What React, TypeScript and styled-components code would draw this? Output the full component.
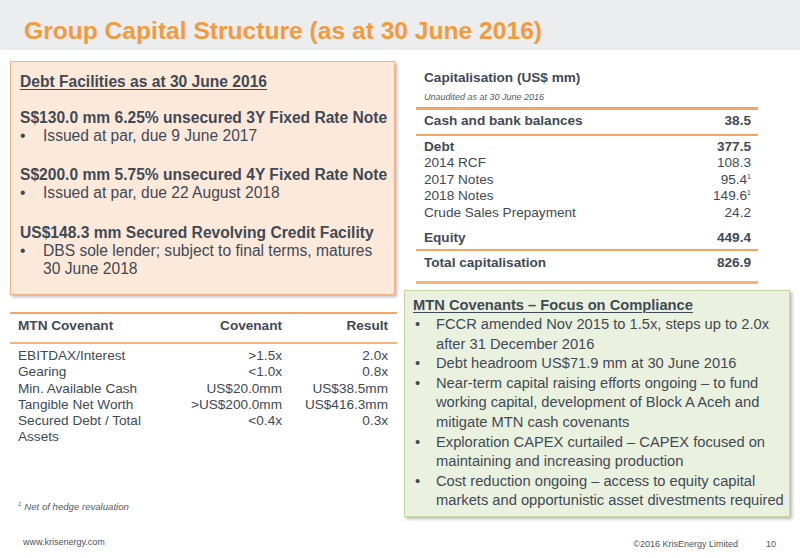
import React from "react";
import styled, { createGlobalStyle } from "styled-components";

const GlobalStyle = createGlobalStyle`
  html, body { margin: 0; padding: 0; background: #ffffff; }
  body { font-family: "Liberation Sans", Arial, sans-serif; color: #3e4955; }
  * { box-sizing: border-box; }
`;

const ORANGE = "#f39a3d";
const TEXT = "#3f4a56";

const Page = styled.div`
  width: 800px;
  height: 558px;
  display: flex;
  flex-direction: column;
  overflow: hidden;
`;

const Header = styled.header`
  height: 50px;
  background: #ecedef;
  padding: 17px 0 0 24px;
`;

const Title = styled.h1`
  margin: 0;
  font-size: 24.6px;
  line-height: 28px;
  font-weight: 700;
  color: ${ORANGE};
`;

const Main = styled.main`
  display: grid;
  grid-template-columns: 387px 386px;
  column-gap: 7px;
  padding: 11px 0 0 10px;
  height: 467px;
`;

const Column = styled.div`
  display: flex;
  flex-direction: column;
  min-height: 0;
`;

const DebtBox = styled.section`
  width: 385px;
  height: 234px;
  background: #fde9da;
  border: 1px solid #f2b58b;
  box-shadow: 2px 2px 3px rgba(0, 0, 0, 0.28);
  padding: 11px 4px 0 9px;
  font-size: 15.6px;
  line-height: 18px;
  color: ${TEXT};
`;

const BoxHeading = styled.h2<{ $size: number }>`
  margin: 0;
  font-size: ${(p) => p.$size}px;
  font-weight: 700;
  text-decoration: underline;
  text-underline-offset: 2px;
  text-decoration-thickness: 1px;
`;

const Facility = styled.div<{ $gap: number }>`
  margin-top: ${(p) => p.$gap}px;
`;

const FacilityTitle = styled.div`
  font-weight: 700;
  white-space: nowrap;
`;

const Bullet = styled.div<{ $indent: number }>`
  display: flex;
  & > span:first-child {
    flex: 0 0 ${(p) => p.$indent}px;
  }
`;

const CovTable = styled.div`
  margin-top: 17px;
  border-top: 2px solid #f5a562;
  font-size: 13.6px;
  line-height: 16.3px;
  color: ${TEXT};
`;

const CovGrid = styled.div<{ $head?: boolean }>`
  display: grid;
  grid-template-columns: 150px 114px 106px;
  padding: ${(p) => (p.$head ? "4px 9px 8px 8px" : "4px 9px 0 8px")};
  font-weight: ${(p) => (p.$head ? 700 : 400)};
  border-bottom: ${(p) => (p.$head ? "2px solid #f6b47c" : "none")};
  line-height: ${(p) => (p.$head ? "16px" : "16.3px")};
`;

const Cell = styled.div<{ $right?: boolean }>`
  text-align: ${(p) => (p.$right ? "right" : "left")};
  white-space: ${(p) => (p.$right ? "nowrap" : "normal")};
`;

const Footnote = styled.div`
  margin-top: auto;
  margin-bottom: 4px;
  padding-left: 8px;
  font-size: 9.6px;
  line-height: 12px;
  font-style: italic;
  color: #555c63;
  sup {
    font-size: 6px;
    vertical-align: 4px;
    margin-right: 3px;
  }
`;

const CapTable = styled.section`
  margin-left: 12px;
  width: 342px;
  color: ${TEXT};
  font-size: 13.6px;
`;

const CapTitle = styled.div`
  padding: 9px 0 0 8px;
  font-weight: 700;
  line-height: 16px;
`;

const CapNote = styled.div`
  padding: 5px 0 0 8px;
  font-size: 9px;
  line-height: 12px;
  font-style: italic;
  color: #555c63;
  margin-bottom: 4px;
`;

const CapSection = styled.div<{ $top: number; $pt: number; $pb: number }>`
  border-top: ${(p) => p.$top}px solid #f5a562;
  padding: ${(p) => p.$pt}px 7px ${(p) => p.$pb}px 8px;
`;

const CapRow = styled.div<{ $bold?: boolean; $gap?: number }>`
  display: flex;
  justify-content: space-between;
  font-weight: ${(p) => (p.$bold ? 700 : 400)};
  line-height: 16.5px;
  margin-top: ${(p) => p.$gap ?? 0}px;
  sup {
    font-size: 7px;
    vertical-align: 5px;
    line-height: 0;
  }
`;

const CapBottom = styled.div`
  border-top: 3px solid #f6b47c;
`;

const GreenBox = styled.section`
  margin-top: 6px;
  width: 386px;
  height: 227px;
  background: #ebf1df;
  border: 1px solid #c5d6a2;
  box-shadow: 2px 2px 3px rgba(0, 0, 0, 0.28);
  padding: 5px 2px 0 8px;
  font-size: 14.7px;
  line-height: 19.6px;
  color: ${TEXT};
`;

const GreenList = styled.div`
  padding-left: 2px;
`;

const Footer = styled.footer`
  display: flex;
  align-items: center;
  padding: 17px 24px 0 23px;
  font-size: 9px;
  line-height: 12px;
  color: #4d555d;
`;

const FooterRight = styled.div`
  margin-left: auto;
  display: flex;
  gap: 28px;
  padding-top: 4px;
`;

const debt = [
  {
    title: "S$130.0 mm 6.25% unsecured 3Y Fixed Rate Note",
    text: "Issued at par, due 9 June 2017",
    gap: 18,
  },
  {
    title: "S$200.0 mm 5.75% unsecured 4Y Fixed Rate Note",
    text: "Issued at par, due 22 August 2018",
    gap: 21,
  },
  {
    title: "US$148.3 mm Secured Revolving Credit Facility",
    text: "DBS sole lender; subject to final terms, matures 30 June 2018",
    gap: 22,
  },
];

const covenants = [
  ["EBITDAX/Interest", ">1.5x", "2.0x"],
  ["Gearing", "<1.0x", "0.8x"],
  ["Min. Available Cash", "US$20.0mm", "US$38.5mm"],
  ["Tangible Net Worth", ">US$200.0mm", "US$416.3mm"],
  ["Secured Debt / Total Assets", "<0.4x", "0.3x"],
];

const compliance = [
  "FCCR amended Nov 2015 to 1.5x, steps up to 2.0x after 31 December 2016",
  "Debt headroom US$71.9 mm at 30 June 2016",
  "Near-term capital raising efforts ongoing \u2013 to fund working capital, development of Block A Aceh and mitigate MTN cash covenants",
  "Exploration CAPEX curtailed \u2013 CAPEX focused on maintaining and increasing production",
  "Cost reduction ongoing \u2013 access to equity capital markets and opportunistic asset divestments required",
];

export default function App() {
  return (
    <Page>
      <GlobalStyle />
      <Header>
        <Title>Group Capital Structure (as at 30 June 2016)</Title>
      </Header>
      <Main>
        <Column>
          <DebtBox>
            <BoxHeading $size={15.6}>Debt Facilities as at 30 June 2016</BoxHeading>
            {debt.map((d) => (
              <Facility key={d.title} $gap={d.gap}>
                <FacilityTitle>{d.title}</FacilityTitle>
                <Bullet $indent={23}>
                  <span>{"\u2022"}</span>
                  <span>{d.text}</span>
                </Bullet>
              </Facility>
            ))}
          </DebtBox>
          <CovTable>
            <CovGrid $head>
              <Cell>MTN Covenant</Cell>
              <Cell $right>Covenant</Cell>
              <Cell $right>Result</Cell>
            </CovGrid>
            <CovGrid>
              {covenants.map((r) => (
                <React.Fragment key={r[0]}>
                  <Cell>{r[0]}</Cell>
                  <Cell $right>{r[1]}</Cell>
                  <Cell $right>{r[2]}</Cell>
                </React.Fragment>
              ))}
            </CovGrid>
          </CovTable>
          <Footnote>
            <sup>1</sup>Net of hedge revaluation
          </Footnote>
        </Column>
        <Column>
          <CapTable>
            <CapTitle>Capitalisation (US$ mm)</CapTitle>
            <CapNote>Unaudited as at 30 June 2016</CapNote>
            <CapSection $top={3} $pt={3} $pb={4}>
              <CapRow $bold>
                <span>Cash and bank balances</span>
                <span>38.5</span>
              </CapRow>
            </CapSection>
            <CapSection $top={2} $pt={3} $pb={3}>
              <CapRow $bold>
                <span>Debt</span>
                <span>377.5</span>
              </CapRow>
              <CapRow>
                <span>2014 RCF</span>
                <span>108.3</span>
              </CapRow>
              <CapRow>
                <span>2017 Notes</span>
                <span>
                  95.4<sup>1</sup>
                </span>
              </CapRow>
              <CapRow>
                <span>2018 Notes</span>
                <span>
                  149.6<sup>1</sup>
                </span>
              </CapRow>
              <CapRow>
                <span>Crude Sales Prepayment</span>
                <span>24.2</span>
              </CapRow>
              <CapRow $bold $gap={8.5}>
                <span>Equity</span>
                <span>449.4</span>
              </CapRow>
            </CapSection>
            <CapSection $top={2} $pt={4} $pb={9}>
              <CapRow $bold>
                <span>Total capitalisation</span>
                <span>826.9</span>
              </CapRow>
            </CapSection>
            <CapBottom />
          </CapTable>
          <GreenBox>
            <BoxHeading $size={14.7}>MTN Covenants &ndash; Focus on Compliance</BoxHeading>
            <GreenList>
              {compliance.map((c) => (
                <Bullet key={c} $indent={21}>
                  <span>{"\u2022"}</span>
                  <span>{c}</span>
                </Bullet>
              ))}
            </GreenList>
          </GreenBox>
        </Column>
      </Main>
      <Footer>
        <span>www.krisenergy.com</span>
        <FooterRight>
          <span>&copy;2016 KrisEnergy Limited</span>
          <span>10</span>
        </FooterRight>
      </Footer>
    </Page>
  );
}
